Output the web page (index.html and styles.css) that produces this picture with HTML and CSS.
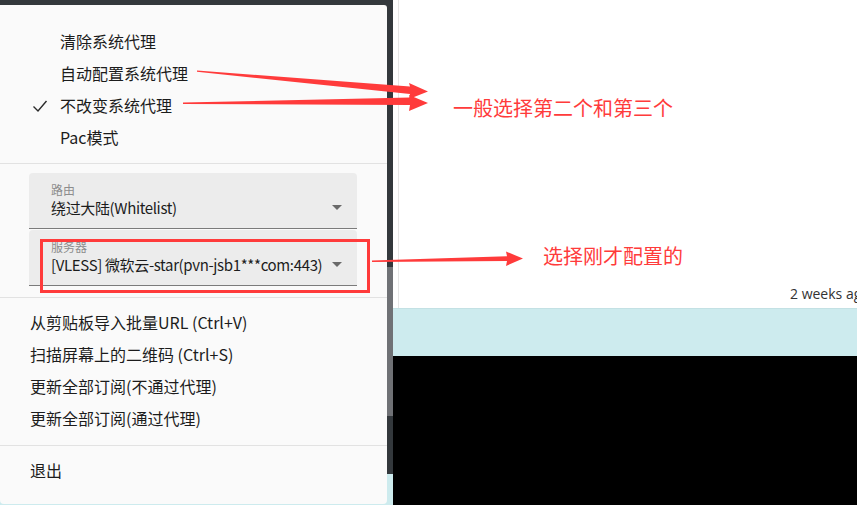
FILE: index.html
```html
<!DOCTYPE html>
<html lang="zh-CN">

<head>
    <meta charset="UTF-8">
    <meta name="viewport" content="width=device-width, initial-scale=1.0">
    <title>v2rayN 托盘菜单</title>
    <link rel="stylesheet" href="styles.css">
</head>

<body>
    <div class="screen">
        <div class="frame">
            <div class="menu">
                <ul class="group group-proxy">
                    <li class="item">清除系统代理</li>
                    <li class="item">自动配置系统代理</li>
                    <li class="item checked">
                        <svg class="check" width="16" height="14" viewBox="0 0 16 14">
                            <path d="M1.5 7.5 L6 12 L14.5 2" fill="none" stroke="#2a2a2a" stroke-width="1.4" />
                        </svg>
                        不改变系统代理
                    </li>
                    <li class="item">Pac模式</li>
                </ul>

                <div class="combos">
                    <div class="combo">
                        <div class="combo-label">路由</div>
                        <div class="combo-value">绕过大陆(Whitelist)</div>
                        <span class="combo-arrow"></span>
                    </div>
                    <div class="combo">
                        <div class="combo-label">服务器</div>
                        <div class="combo-value">[VLESS] 微软云-star(pvn-jsb1***com:443)</div>
                        <span class="combo-arrow"></span>
                    </div>
                </div>

                <ul class="group group-sub">
                    <li class="item">从剪贴板导入批量URL (Ctrl+V)</li>
                    <li class="item">扫描屏幕上的二维码 (Ctrl+S)</li>
                    <li class="item">更新全部订阅(不通过代理)</li>
                    <li class="item">更新全部订阅(通过代理)</li>
                </ul>

                <ul class="group group-exit">
                    <li class="item">退出</li>
                </ul>
            </div>
        </div>

        <div class="pane">
            <div class="feed">
                <div class="feed-meta">2 weeks ago</div>
            </div>
            <div class="banner"></div>
            <div class="video"></div>
        </div>
    </div>

    <!-- 标注 -->
    <svg class="marks" width="857" height="505" viewBox="0 0 857 505">
        <polygon points="197,70.5 410,86.5 409,83 428,91.5 409,99 410,94 197,71.8" fill="#ff3b3b" />
        <polygon points="183,102.6 410,97.5 409,95 428,103 409,111 410,105 183,104" fill="#ff3b3b" />
        <polygon points="372,260.6 507,256.2 506,251.5 523,258.5 506,266 507,261 372,262" fill="#ff3b3b" />
    </svg>
    <div class="highlight-box"></div>
    <div class="note note-proxy">一般选择第二个和第三个</div>
    <div class="note note-server">选择刚才配置的</div>
</body>

</html>
```

FILE: styles.css
```css
html,
body {
    margin: 0;
    padding: 0;
    width: 857px;
    height: 505px;
    overflow: hidden;
    font-family: "Noto Sans CJK SC", "Noto Sans", sans-serif;
    background-color: #000;
}

.screen {
    display: flex;
    height: 505px;
}

.frame {
    flex-shrink: 0;
    width: 387px;
    padding: 5px 6px 0 0;
    background: linear-gradient(to bottom, #33383c 0 267px, #6f7175 267px 416px, #33383c 416px 474px, #cdebee 474px);
}

.menu {
    height: 499px;
    background-color: #fafafa;
    border-radius: 0 3px 4px 4px;
    color: #1c1c1c;
    font-size: 16px;
}

.group {
    list-style: none;
    margin: 0;
    padding: 0;
    border-bottom: 1px solid #e2e2e2;
}

.item {
    position: relative;
    height: 32px;
    line-height: 32px;
    white-space: nowrap;
}

.group-proxy {
    padding: 20px 0 10px 60px;
}

.check {
    position: absolute;
    left: -28px;
    top: 10px;
}

.combos {
    padding: 9px 0 10px 29px;
    border-bottom: 1px solid #e2e2e2;
}

.combo {
    position: relative;
    width: 306px;
    padding: 10px 0 9px 22px;
    margin-bottom: 1px;
    background-color: #ececec;
    border-radius: 4px 4px 0 0;
    border-bottom: 1px solid #7b7b7b;
}

.combo-label {
    font-size: 12px;
    line-height: 14px;
    color: #8d8d8d;
}

.combo-value {
    font-size: 15px;
    letter-spacing: -0.35px;
    line-height: 22px;
    white-space: nowrap;
}

.combo-arrow {
    position: absolute;
    right: 15px;
    top: 32px;
    border-left: 5px solid transparent;
    border-right: 5px solid transparent;
    border-top: 5px solid #6a6a6a;
}

.group-sub {
    padding: 8px 0 11px 30px;
}

.group-exit {
    padding: 8px 0 0 30px;
    border-bottom: none;
}

.pane {
    flex: 1;
    min-width: 0;
    display: flex;
    flex-direction: column;
}

.feed {
    height: 308px;
    background-color: #fff;
    padding-left: 5px;
}

.feed-meta {
    height: 308px;
    box-sizing: border-box;
    border-left: 1px solid #e6e6e6;
    padding: 284px 0 0 391px;
    font-size: 14px;
    line-height: 20px;
    color: #333;
    white-space: nowrap;
    overflow: hidden;
    font-family: "Open Sans", "Noto Sans", sans-serif;
}

.banner {
    height: 47px;
    background-color: #cdebee;
    border-top: 1px solid #c3e1e4;
}

.video {
    flex: 1;
    background-color: #000;
}

.marks {
    position: absolute;
    left: 0;
    top: 0;
}

.highlight-box {
    position: absolute;
    left: 40px;
    top: 239px;
    width: 324px;
    height: 48px;
    border: 3px solid #ff3b3b;
}

.note {
    position: absolute;
    font-size: 20px;
    line-height: 24px;
    color: #ff3b3b;
    white-space: nowrap;
}

.note-proxy {
    left: 453px;
    top: 96px;
}

.note-server {
    left: 543px;
    top: 244px;
}
```
